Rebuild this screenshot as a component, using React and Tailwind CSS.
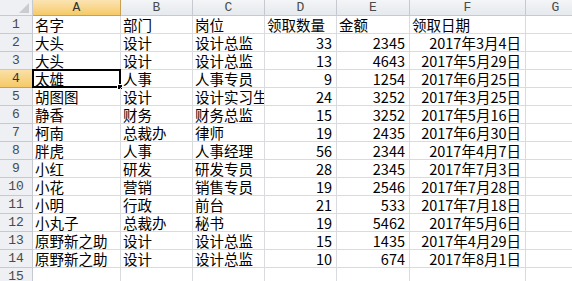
const cols = [
  { key: 'A', w: 'w-[88px]' },
  { key: 'B', w: 'w-[72px]' },
  { key: 'C', w: 'w-[72px]' },
  { key: 'D', w: 'w-[72px]' },
  { key: 'E', w: 'w-[73px]' },
  { key: 'F', w: 'w-[116px]' },
  { key: 'G', w: 'w-[60px]' },
]

const rows = [
  ['名字', '部门', '岗位', '领取数量', '金额', '领取日期'],
  ['大头', '设计', '设计总监', 33, 2345, '2017年3月4日'],
  ['大头', '设计', '设计总监', 13, 4643, '2017年5月29日'],
  ['太雄', '人事', '人事专员', 9, 1254, '2017年6月25日'],
  ['胡图图', '设计', '设计实习生', 24, 3252, '2017年3月25日'],
  ['静香', '财务', '财务总监', 15, 3252, '2017年5月16日'],
  ['柯南', '总裁办', '律师', 19, 2435, '2017年6月30日'],
  ['胖虎', '人事', '人事经理', 56, 2344, '2017年4月7日'],
  ['小红', '研发', '研发专员', 28, 2345, '2017年7月3日'],
  ['小花', '营销', '销售专员', 19, 2546, '2017年7月28日'],
  ['小明', '行政', '前台', 21, 533, '2017年7月18日'],
  ['小丸子', '总裁办', '秘书', 19, 5462, '2017年5月6日'],
  ['原野新之助', '设计', '设计总监', 15, 1435, '2017年4月29日'],
  ['原野新之助', '设计', '设计总监', 10, 674, '2017年8月1日'],
  ['', '', '', '', '', ''],
]

const font = "font-['SimSun','Noto_Sans_CJK_SC',sans-serif]"
const headFont = "font-['Liberation_Mono',monospace]"

export default function App() {
  return (
    <div className={`w-[572px] h-[281px] overflow-hidden bg-white text-[14.5px] text-black ${font}`}>
      {/* Column headers */}
      <div className="flex h-[16px]">
        <div className="relative w-[33px] shrink-0 border-r border-b border-[#c6cad0] bg-[#eef0f3]">
          <div className="absolute right-[3px] bottom-[2px] w-0 h-0 border-l-[10px] border-l-transparent border-b-[10px] border-b-[#c9cdd2]" />
        </div>
        {cols.map((c) => (
          <div
            key={c.key}
            className={`${c.w} shrink-0 flex items-center justify-center text-[13px] leading-none border-r border-b ${headFont} ${
              c.key === 'A'
                ? 'bg-gradient-to-b from-[#fbe4b3] to-[#f5c965] border-[#c9a14e] text-[#333]'
                : 'bg-gradient-to-b from-[#f3f5f7] to-[#e6e9ed] border-[#c6cad0] text-[#4a4a4a]'
            }`}
          >
            {c.key}
          </div>
        ))}
      </div>

      {/* Rows */}
      {rows.map((r, i) => {
        const n = i + 1
        const active = n === 4
        return (
          <div key={n} className="flex h-[18px]">
            <div
              className={`w-[33px] shrink-0 flex items-center justify-center text-[13px] leading-none border-r border-b ${headFont} ${
                active
                  ? 'bg-gradient-to-b from-[#fbe0a6] to-[#f5c965] border-[#c9a14e] text-[#333]'
                  : 'bg-[#eef0f3] border-[#c6cad0] text-[#4a4a4a]'
              }`}
            >
              {n}
            </div>
            {cols.map((c, j) => {
              const v = j < 6 ? r[j] : ''
              const num = typeof v === 'number' || j === 5
              const isHead = n === 1
              return (
                <div
                  key={c.key}
                  className={`${c.w} shrink-0 relative flex items-center border-r border-b border-[#d9dbde] leading-[18px] whitespace-nowrap ${
                    num && !isHead ? 'justify-end pr-[4px]' : 'pl-[2px]'
                  } ${j === 2 ? 'overflow-hidden' : ''}`}
                >
                  {v}
                  {active && j === 0 && (
                    <div className="absolute -left-[1px] -top-[1px] w-[89px] h-[19px] border-2 border-black pointer-events-none">
                      <div className="absolute -right-[4px] -bottom-[4px] w-[6px] h-[6px] bg-black border border-white" />
                    </div>
                  )}
                </div>
              )
            })}
          </div>
        )
      })}
    </div>
  )
}
